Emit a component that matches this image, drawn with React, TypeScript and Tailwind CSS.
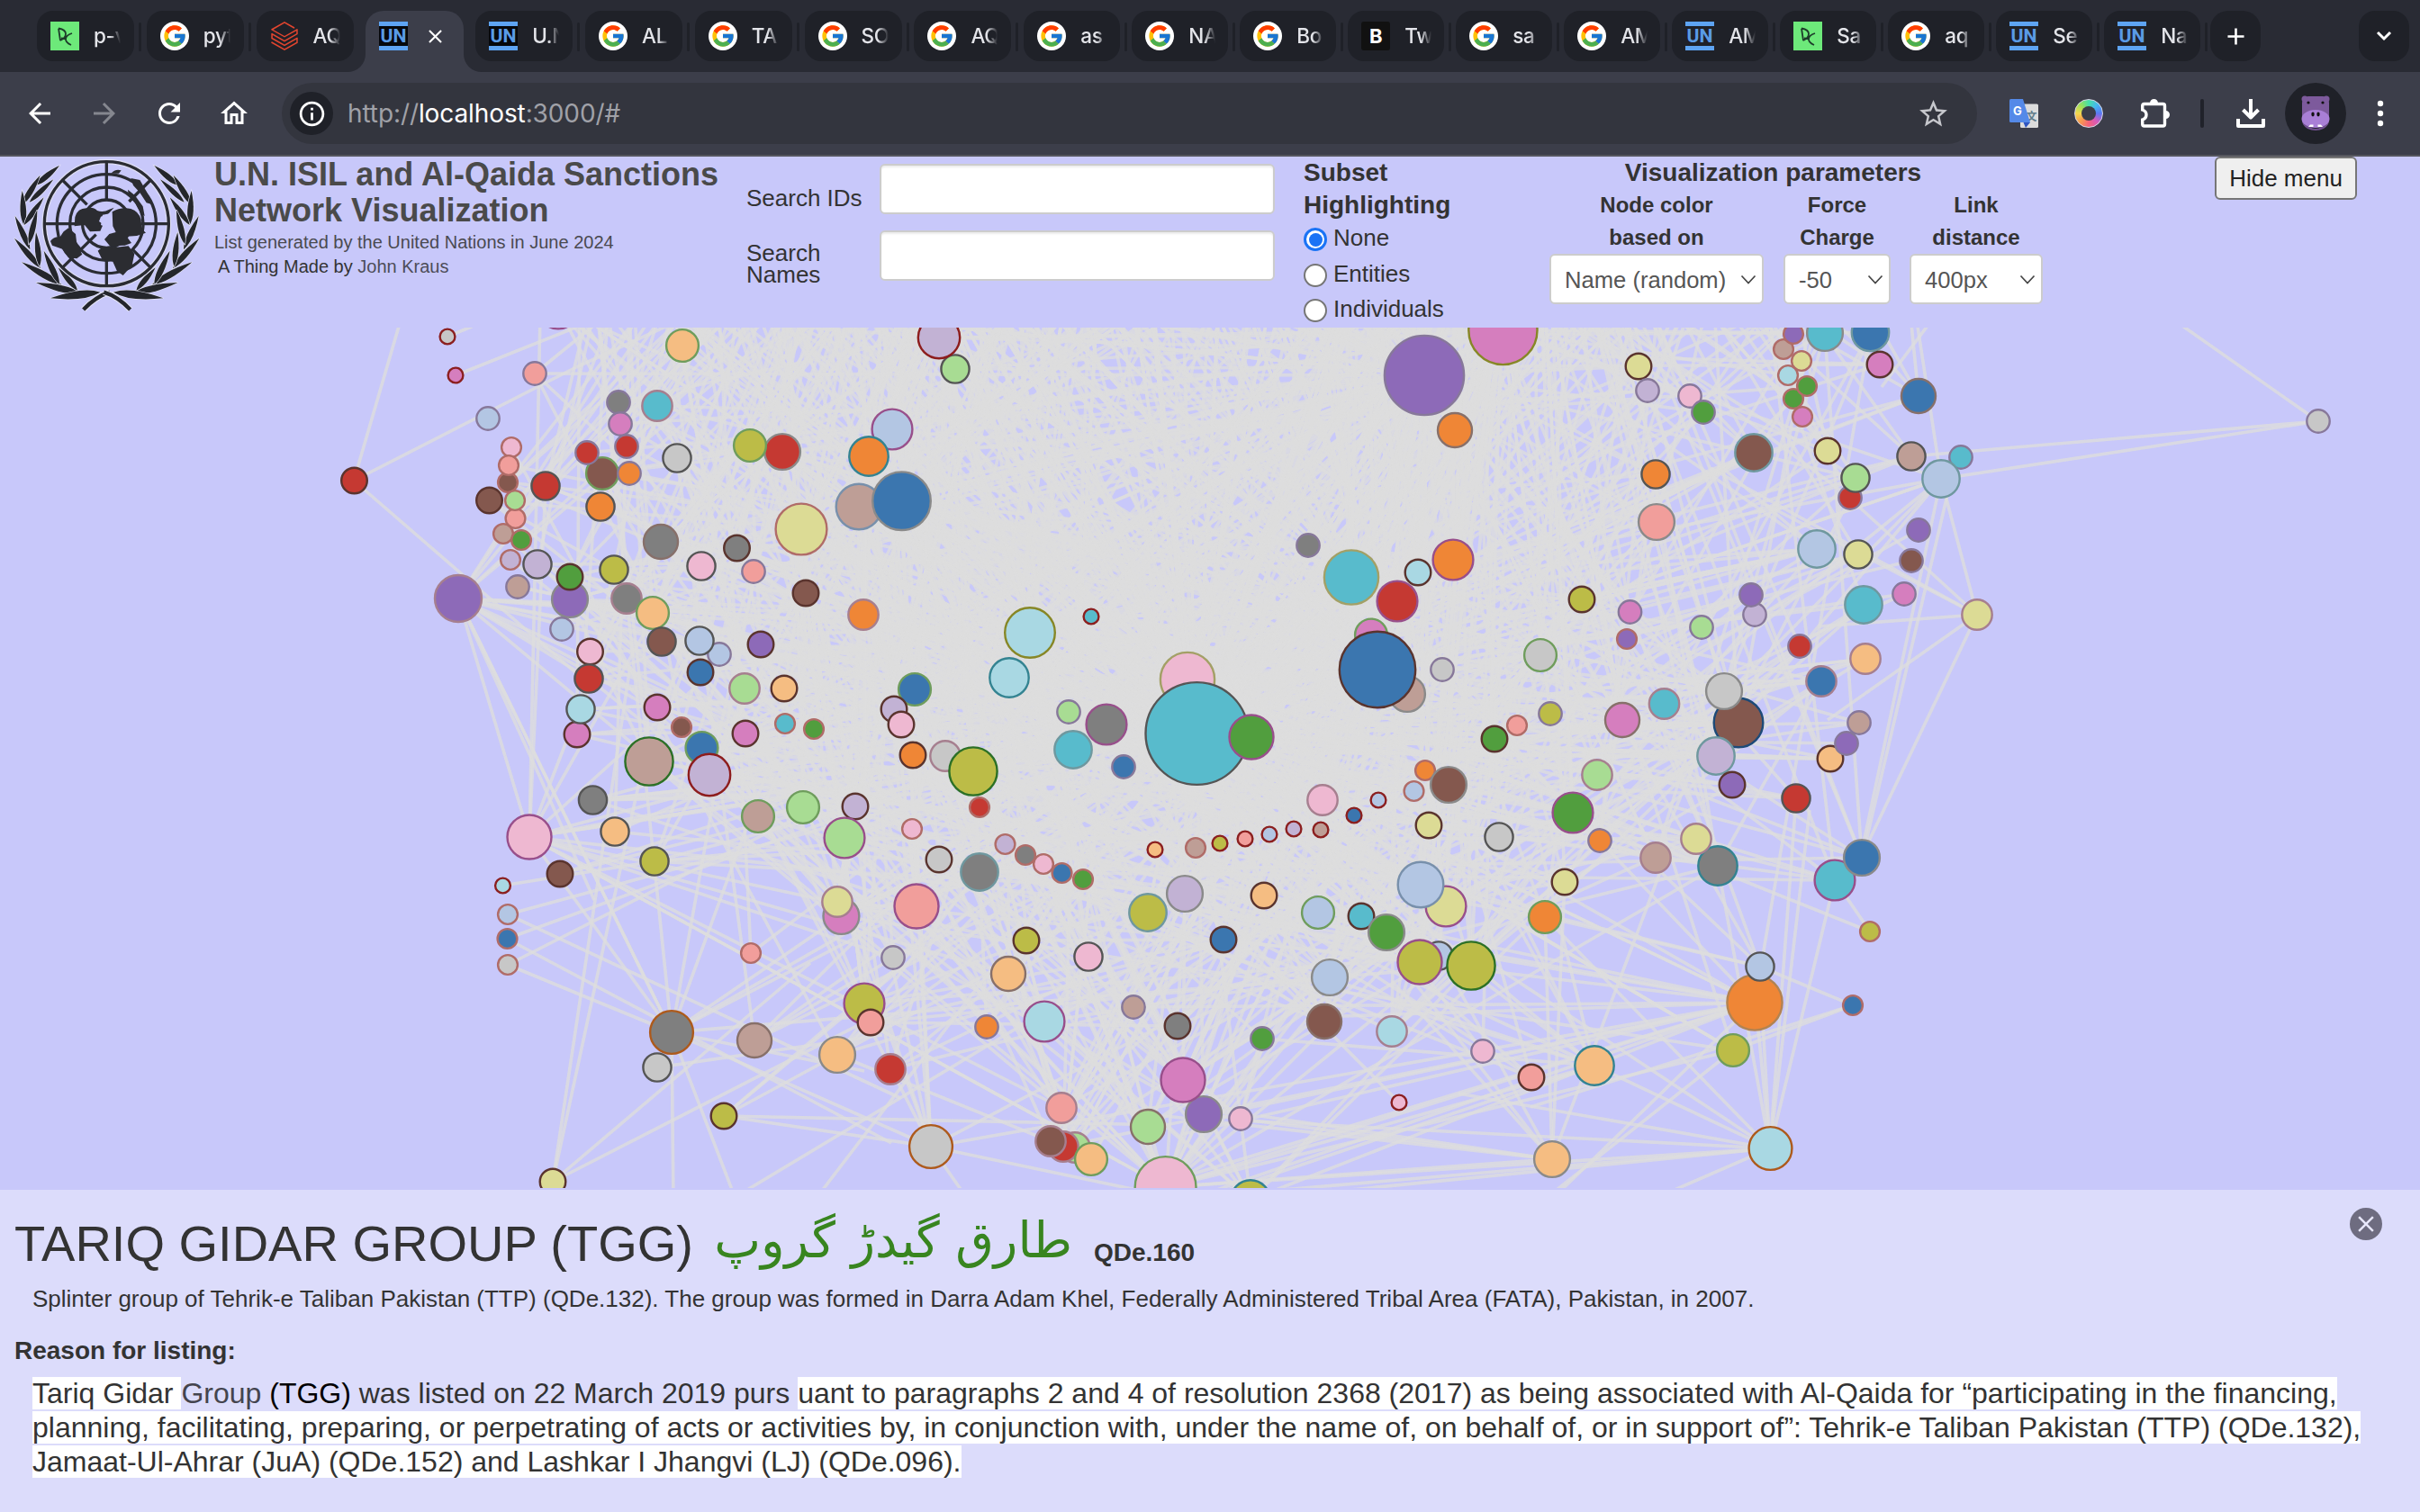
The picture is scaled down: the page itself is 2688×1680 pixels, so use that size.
import React from "react";
import {
  MdArrowBack,
  MdArrowForward,
  MdRefresh,
  MdOutlineHome,
  MdStarOutline,
  MdAdd,
  MdClose,
  MdInfoOutline,
} from "react-icons/md";
import { FcGoogle } from "react-icons/fc";
import { SiDatabricks } from "react-icons/si";

/* ---------------------------------------------------------------- graph data */

const FILL: Record<string, string> = {
  b: "#3b76af", B: "#b3c6e3", o: "#ef8636", O: "#f5bd82", g: "#519e3e", G: "#a8dc93",
  r: "#c53932", R: "#f19e9b", p: "#8d6ab8", P: "#c2b2d4", n: "#84584e", N: "#be9e96",
  m: "#d57ebe", M: "#eeb8d1", k: "#7f7f7f", K: "#c7c7c7", y: "#bcbc47", Y: "#dcdb95",
  c: "#58bbcc", C: "#a9d8e3",
};

/* kind -> [outer radius, outline, number of links] */
const KIND: Record<string, [number, string, number]> = {
  a: [9.3, "#8b1f1f", 1], b: [11.8, "#b06c68", 2], c: [13.6, "#87789a", 3],
  d: [15.2, "#5a342e", 5], e: [16.5, "#555555", 6], f: [17.6, "#a67f8f", 7],
  g: [18.8, "#6f9d5d", 8], h: [19.9, "#87706a", 9], i: [20.8, "#8a8a8a", 10],
  j: [21.6, "#6f989f", 11], k: [22.6, "#338391", 12], l: [23.3, "#984f8b", 13],
  m: [24.1, "#8d1d1d", 14], n: [24.8, "#ad5a1c", 15], o: [25.4, "#984f8b", 16],
  q: [26.2, "#7890ab", 18], r: [26.9, "#a67f8f", 18], s: [27.5, "#2c7026", 20],
  t: [28.2, "#1d4a78", 21], u: [28.7, "#878726", 22], v: [29.3, "#b06c68", 22],
  w: [31, "#a3a066", 26], x: [31.5, "#b28352", 26], y: [33.2, "#8a8a8a", 30],
  z: [34.8, "#6f9d5d", 36], A: [39, "#878726", 45], B: [43.1, "#5a342e", 60],
  C: [45, "#87789a", 60], D: [57.8, "#555555", 110],
};

/* "x y kind fill", painted in order */
const NODES = `
497 374 a K;506 417 a m;594 415 c R;758 384 g O;620 343 l P;1061 410 e G;1043 375 m P;
687 447 c k;730 451 f c;689 471 c m;542 465 c B;696 496 c r;669 526 g n;652 503 c r;699 526 c o;667 563 e o;
752 509 e K;869 502 i r;833 495 g y;991 477 l B;965 507 k o;954 563 q N;1001.5 556.7 y b;890 588 v Y;
564 536 b n;568 497 b M;565 517 b R;543.5 556 d n;572.5 576 b R;572 556 b G;559 593 b N;579 600 b g;567 622 b P;
606 540 e r;393.5 534 d r;597 627 e P;575 652 c N;633 666 i p;633 641 d g;509 665 r p;624 699 c B;
682 633 e y;696 665 f k;725 681 g O;734 602 h k;779 629 e M;818.5 609 d k;837 635 c R;895 659 d n;959 683 f o;
735 713 e n;799 727 c B;777 712 e B;845 716 d p;778 747 d b;827 765 f G;871 765 d O;655.5 724 d M;654 754 e r;
641 816 d m;645 788 e C;730 786 d m;757 808 b n;828 815 d m;872 804 b c;904 810 b g;1016 766 g b;993 788 d P;
1001 805 d M;1014 839 d o;1050 840 f K;1081 857 s y;721 846 s N;779.5 831 g b;788 861 m P;
1144 703 u C;1121 753 k C;1212 685 a c;1187 791 c G;1229 805 l k;1192 833 j c;1319 755 w M;1329.4 815 D c;1390 819 o g;
1582 417 C p;1616 478 h o;1453 606 c k;1501 641.5 w c;1614 622 l o;1552 668 l r;1575 636 d C;1523 705.5 g m;
1563 771 i N;1530 744 B b;1602 744 c K;1660 821 d g;1685 806 b R;1669.4 367 A m;
1820 407 d Y;1830 434 c P;1877 440 c M;1892 458 c g;2027 370 i c;2077.5 369.4 j b;1981 388 b N;1992 371 b p;
2001 401 b Y;1986 417 b C;1992 443 b g;2007 429 b g;2002 463 b m;2088 405 d m;2131 440 h b;1948 503 j n;
2030 501 d Y;2123 507 e N;2178 508 c c;2156 532 j B;1839 527 e o;1840 580 i R;2055 553 c r;2061 531 e G;
2018 610 j B;2064 616 e Y;2131 589 c p;2123 623 c n;2115 660 c m;2070 672 j c;2196 683 f Y;1757 666 d y;
1810.5 680 c m;1807 710 b p;1890 697 c G;1949 683 c P;1945 661 c p;1999 718 c r;2072 732 f O;2023 757 f b;
1711 728 g K;1931 803 t n;1915 768 i K;1906 840 j P;1722 793 c y;1802 800 h m;1848.5 782 f c;2033 843 d O;
2065 803 c N;2051 826 c p;2575 468 c K;
658.5 889 e k;683 924 e O;588 930 o M;622 971 d n;727 957 e y;558.5 984 a C;564 1016 b B;563.5 1043 b b;564 1072 b K;
842 907 g N;892 897 g G;950 896 d P;938 931 l G;1088 897 b r;1013 921 b M;1043 955 d K;1088 969 j k;
1116.5 938 b P;1139 950 b k;1159 960 b M;1179.5 970 b b;1203 977 b g;934.4 1018 i m;930 1002 f Y;1018 1007 o R;
834 1059 b R;992 1064 c K;1140 1045 d y;1120 1082 h O;960 1115 l y;967 1136 d R;1096 1141 c o;1160 1135 l C;
730 1186 e K;746 1147 n k;838 1156 h N;930 1172 i O;989 1188 f r;804 1240 d y;614 1313 d Y;1034 1274 n K;
1179 1231 f R;1194 1275 f G;1181 1274 f r;1167 1268 f n;1212 1288 g O;1275 1252 h G;1337 1238 i p;1314 1200 o m;
1378 1243 c M;1294.6 1319 z M;1389 1333 k y;1248 852 c b;1283 944 a O;1328 942 b N;1355 937 a y;1383 932 a R;
1410 927 a B;1437 921 a P;1467 922 a N;1504 906 a b;1531 889 a B;1469 889 f M;1583 856 b o;1570.5 879 b B;
1609 872 i n;1587 917 d Y;1665 930 e K;1774 861 f G;1747 903 l g;1777 934 c o;1316 993 i P;1275 1014 j y;
1404 995 d O;1464 1014 g B;1512 1018 d c;1540 1036 i g;1606 1007 l Y;1578 983 q B;1738 980 d Y;1716 1019 g o;
1359 1044 d b;1209 1063 e M;1598 1062 e B;1577 1069 o y;1634 1073 s y;1477 1086 i B;1259 1119 c N;1308 1140 d k;
1402 1154 c g;1471 1135 h n;1546 1146 f C;1647 1168 c M;1701 1197 d R;1771 1184 k O;1554 1225 a M;1724 1288 i O;
1924 872 d p;1995 887 e r;2038 978 l c;2068 953 i b;1839 953 f N;1908 962 k k;1884 932 f Y;2077 1035 b y;
1949 1114 x o;1955 1074 e B;2058 1117 b b;1925 1167 g y;1966.5 1276 n C`
  .trim()
  .split(";")
  .map((row) => {
    const [x, y, kind, fill] = row.trim().split(/\s+/);
    return { x: Number(x), y: Number(y), kind, fill };
  });

/* Links of the nodes on the rim: x1 y1 x2 y2 */
const RIM: number[][] = [
  [393, 534, 640, 408], [640, 408, 900, 290], [393, 534, 470, 270], [393, 534, 640, 748], [497, 374, 700, 290],
  [506, 417, 900, 260], [2575, 468, 2123, 507], [2575, 468, 2156, 532], [2575, 468, 2424, 362], [2156, 532, 1780, 600],
  [558, 984, 727, 957], [564, 1016, 990, 900], [564, 1016, 1000, 1220], [563, 1043, 1010, 880], [563, 1043, 990, 1270],
  [564, 1072, 1000, 850], [564, 1072, 746, 1147],
  [614, 1313, 714, 850], [614, 1313, 700, 740], [614, 1313, 900, 1070], [614, 1313, 1010, 1110],
  [804, 1240, 1034, 1274], [804, 1240, 1294, 1250], [804, 1240, 990, 1080], [804, 1240, 1080, 1010], [804, 1240, 1100, 1080],
  [746, 1147, 748, 1340], [746, 1147, 820, 1340], [746, 1147, 1034, 1274], [730, 1186, 980, 1150], [746, 1147, 960, 1190],
  [1034, 1274, 1300, 1330], [1034, 1274, 1080, 1340], [1160, 1000, 900, 1340], [1200, 1100, 800, 1340],
  [509, 665, 561, 840], [561, 840, 588, 930], [509, 665, 600, 864], [600, 864, 660, 1000], [509, 665, 654, 754],
  [509, 665, 746, 1147], [588, 930, 600, 350], [588, 930, 606, 540], [588, 930, 746, 1147],
  [2196, 683, 2156, 532], [2196, 683, 2020, 696], [2196, 683, 2030, 800], [2196, 683, 2066, 955], [2196, 683, 1960, 560],
  [2196, 683, 1900, 520], [2196, 683, 2056, 555], [2156, 532, 2066, 955], [2170, 520, 2068, 955], [2156, 532, 2128, 350],
  [2131, 440, 2122, 350], [2090, 430, 2150, 350], [2077, 1035, 2038, 978], [2077, 1035, 1840, 940],
  [2058, 1117, 1955, 1074], [2058, 1117, 1925, 1167], [2058, 1117, 1700, 1230],
  [1966, 1276, 1950, 1114], [1966, 1276, 1956, 1100], [1966, 1276, 2038, 978], [1966, 1276, 2010, 900],
  [1966, 1276, 1995, 887], [1966, 1276, 1908, 962], [1966, 1276, 1771, 1184], [1966, 1276, 1620, 1215],
  [1966, 1276, 1640, 1060], [1966, 1276, 1377, 1245], [1966, 1276, 1294, 1319], [1966, 1276, 1330, 1330],
  [1966, 1276, 1389, 1333], [1966, 1276, 1860, 1322], [1966, 1276, 1716, 1019],
  [1724, 1288, 1294, 1240], [1724, 1288, 1337, 1238], [1724, 1288, 1400, 1240], [1724, 1288, 1716, 1019],
  [1724, 1288, 1738, 980], [1724, 1288, 1850, 953], [1724, 1288, 1500, 1000], [1724, 1288, 1600, 1062],
  [1724, 1288, 1294, 1319], [1724, 1288, 1546, 1090],
  [1949, 1114, 1294, 1319], [1949, 1114, 1300, 1312], [1949, 1114, 1314, 1260], [1949, 1114, 1337, 1238],
  [1949, 1114, 1389, 1333], [1949, 1114, 1300, 1340], [1949, 1114, 1180, 1274], [1949, 1114, 1460, 1130],
  [1949, 1114, 1716, 1340], [1925, 1167, 1294, 1319], [1925, 1167, 1700, 1345],
  [1771, 1184, 1294, 1319], [1771, 1184, 1340, 1330], [1955, 1074, 1716, 1019], [1955, 1074, 1578, 983],
];

type Pt = { x: number; y: number; w: number };

function buildLinks(): number[][] {
  let seed = 20240617;
  const rnd = () => {
    seed = (seed * 1664525 + 1013904223) % 4294967296;
    return seed / 4294967296;
  };
  const pts: Pt[] = NODES.filter((n) => {
    if (n.x > 2190 || (n.x < 600 && n.y > 950)) return false;
    if (n.x < 500 || (n.x > 2050 && n.y > 1000)) return false;
    if (n.x < 820 && n.y > 1180) return false;
    return !(n.x > 1700 && n.y > 1260);
  }).map((n) => ({ x: n.x, y: n.y, w: KIND[n.kind][2] }));
  /* upper half of the ring, hidden by the menu */
  for (let i = 0; i < 150; i++) {
    const a = Math.PI * (1 + rnd());
    const q = 0.35 + 0.65 * Math.sqrt(rnd());
    pts.push({ x: 1310 + Math.cos(a) * 760 * q, y: 350 + Math.sin(a) * 800 * q, w: 3 + rnd() * 9 });
  }
  pts.push({ x: 1240, y: -60, w: 90 }, { x: 960, y: 120, w: 50 }, { x: 1700, y: 40, w: 50 });
  const total = pts.reduce((s, p) => s + p.w, 0);
  const pick = () => {
    let t = rnd() * total;
    for (const p of pts) {
      t -= p.w;
      if (t <= 0) return p;
    }
    return pts[0];
  };
  const out: number[][] = [];
  for (const p of pts) {
    const n = Math.round(p.w * 0.72);
    for (let i = 0; i < n; i++) {
      for (let k = 0; k < 5; k++) {
        const q = pick();
        const d = Math.hypot(q.x - p.x, q.y - p.y);
        const sideways = Math.abs((p.x + q.x) / 2 - 1310) / 500;
        const low = Math.max(0, (p.y + q.y) / 2 - 790) / 290;
        if (d > 200 && d < 1050 && rnd() < Math.exp(-sideways * sideways - low * low)) {
          out.push([p.x, p.y, q.x, q.y]);
          break;
        }
      }
    }
  }
  return out.concat(RIM);
}

const LINKS = buildLinks();

function Graph() {
  return (
    <svg className="block h-[956px] w-full" viewBox="0 364 2688 956">
      <g stroke="#dddddd" strokeOpacity="0.8" strokeWidth="3.6">
        {LINKS.map((l, i) => (
          <line key={i} x1={l[0]} y1={l[1]} x2={l[2]} y2={l[3]} />
        ))}
      </g>
      <g strokeWidth="2.4">
        {NODES.map((n, i) => {
          const [r, stroke] = KIND[n.kind];
          return <circle key={i} cx={n.x} cy={n.y} r={r - 0.9} fill={FILL[n.fill]} stroke={stroke} />;
        })}
      </g>
    </svg>
  );
}

/* ------------------------------------------------------------------ favicons */

function UnIcon({ dark }: { dark?: boolean }) {
  return (
    <svg width="32" height="32" viewBox="0 0 32 32">
      {dark && <rect y="4" width="32" height="24" fill="#06080c" />}
      <rect width="32" height="5" fill="#5ea4f3" />
      <rect y="27" width="32" height="5" fill="#5ea4f3" />
      <text x="16" y="23.4" fontSize="20.500" fontWeight="700" textAnchor="middle" textLength="29" lengthAdjust="spacingAndGlyphs" fill="#5a9be6" fontFamily="Roboto, sans-serif">
        UN
      </text>
    </svg>
  );
}

function GIcon() {
  return (
    <span className="flex size-8 items-center justify-center rounded-full bg-white">
      <FcGoogle size={28} />
    </span>
  );
}

function DocIcon() {
  return (
    <svg width="32" height="32" viewBox="0 0 32 32">
      <rect width="32" height="32" fill="#6de97a" />
      <path d="M9 7.500L11 21M9 7.500Q17 9 17 13.500T11 21M24 13Q17.500 15 17 19T23 26M12 18.500L17 19" fill="none" stroke="#1d3b2a" strokeWidth="1.8" />
    </svg>
  );
}

function BIcon() {
  return (
    <span className="flex size-8 items-center justify-center rounded-[3px] bg-[#111111] font-['Inter',sans-serif] text-[22px] font-bold leading-none text-white">
      B
    </span>
  );
}

type TabInfo = { icon: "doc" | "g" | "brick" | "undark" | "un" | "b"; label: string; active?: boolean };

const TABS: TabInfo[] = [
  { icon: "doc", label: "p-v" },
  { icon: "g", label: "pyt" },
  { icon: "brick", label: "AQ" },
  { icon: "undark", label: "", active: true },
  { icon: "undark", label: "U.N" },
  { icon: "g", label: "AL" },
  { icon: "g", label: "TA" },
  { icon: "g", label: "SO" },
  { icon: "g", label: "AQ" },
  { icon: "g", label: "as" },
  { icon: "g", label: "NA" },
  { icon: "g", label: "Bo" },
  { icon: "b", label: "Tw" },
  { icon: "g", label: "sa" },
  { icon: "g", label: "AM" },
  { icon: "un", label: "AM" },
  { icon: "doc", label: "Sa" },
  { icon: "g", label: "aq" },
  { icon: "un", label: "Se" },
  { icon: "un", label: "Na" },
];

function TabIcon({ icon }: { icon: TabInfo["icon"] }) {
  if (icon === "doc") return <DocIcon />;
  if (icon === "g") return <GIcon />;
  if (icon === "brick") return <SiDatabricks size={32} color="#e2452f" />;
  if (icon === "b") return <BIcon />;
  return <UnIcon dark={icon === "undark"} />;
}

function Tab({ tab, wide, sep }: { tab: TabInfo; wide: boolean; sep: boolean }) {
  return (
    <div className={wide ? "flex w-[121.8px] shrink-0" : "flex w-[120px] shrink-0"}>
      {tab.active ? (
        <div className="relative flex h-[68px] w-[109px] rounded-t-[20px] bg-[#3c3e4a] pl-[15px] pt-3">
          <svg className="absolute -left-5 bottom-0" width="20" height="20">
            <path d="M20 0A20 20 0 0 1 0 20H20Z" fill="#3c3e4a" />
          </svg>
          <svg className="absolute -right-5 bottom-0" width="20" height="20">
            <path d="M0 0A20 20 0 0 0 20 20H0Z" fill="#3c3e4a" />
          </svg>
          <TabIcon icon={tab.icon} />
          <MdClose size={25} color="#fff" className="ml-[18px] mt-1" />
        </div>
      ) : (
        <div className={wide ? "flex h-14 w-[108px] rounded-[18px] bg-[#1f2128] pl-[15px] pt-3" : "flex h-14 w-[107px] rounded-[18px] bg-[#1f2128] pl-[15px] pt-3"}>
          <TabIcon icon={tab.icon} />
          <span className="ml-4 w-[30px] overflow-hidden whitespace-nowrap font-['Inter',sans-serif] text-[22.500px] font-medium leading-8 tracking-[-0.3px] text-[#e4e5ea] [mask-image:linear-gradient(to_right,black_60%,transparent)]">
            {tab.label}
          </span>
        </div>
      )}
      {sep && <div className="ml-[5px] mt-[13px] h-8 w-[3px] rounded-full bg-[#1f2128]" />}
    </div>
  );
}

function Emblem() {
  const leaves: [number, number, number, number, number][] = [
    [168, 42, 88, 108, 19], [104, 74, 44, 172, 19], [148, 88, 68, 164, 17], [44, 126, 50, 240, 20],
    [116, 148, 50, 240, 18], [20, 210, 70, 322, 19], [94, 190, 66, 304, 19], [18, 284, 106, 384, 20],
    [90, 264, 102, 378, 19], [42, 364, 176, 440, 22], [116, 326, 168, 438, 20], [90, 432, 240, 468, 22],
    [164, 382, 228, 458, 18], [138, 484, 304, 464, 26],
  ];
  const leaf = ([x1, y1, x2, y2, w]: number[]) => {
    const d = Math.hypot(x2 - x1, y2 - y1);
    const nx = (-(y2 - y1) / d) * w;
    const ny = ((x2 - x1) / d) * w;
    const mx = (x1 + x2 * 2) / 3;
    const my = (y1 + y2 * 2) / 3;
    return `M${x1} ${y1}Q${mx + nx} ${my + ny} ${x2} ${y2}Q${mx - nx} ${my - ny} ${x1} ${y1}Z`;
  };
  const half = (
    <>
      {leaves.map((l, i) => (
        <path key={i} d={leaf(l)} fill="#24262b" stroke="#e4e4f4" strokeWidth="4" paintOrder="stroke" />
      ))}
      <path d="M336 464Q290 478 248 522" fill="none" stroke="#e4e4f4" strokeWidth="20" />
      <path d="M336 464Q290 478 248 522" fill="none" stroke="#24262b" strokeWidth="13" />
    </>
  );
  return (
    <svg className="block shrink-0" width="220" height="180" viewBox="0 12 660 540">
      <g>{half}</g>
      <g transform="translate(652 0) scale(-1 1)">{half}</g>
      <circle cx="325" cy="236" r="207" fill="none" stroke="#dedef4" strokeWidth="17" />
      <g fill="none" stroke="#2a2c33" strokeWidth="10">
        <circle cx="325" cy="236" r="207" />
        <circle cx="325" cy="236" r="165" />
        <circle cx="325" cy="236" r="122" />
        <circle cx="325" cy="236" r="80" />
        <path d="M325 30V160M325 320V442M118 236H220M440 236H532M178 90L260 172M472 90L400 162M178 382L290 272M472 382L410 320" />
      </g>
      <g fill="#2b2c31">
        <path d="M220 214q8-30 38-30 22-6 36 8 20 8 40-4l16-6-20 22-24 8-6 16 14 10-10 22-34 2-18-22-34 4z" />
        <path d="M344 196q30-18 62-10 26 8 34 36l2 30 14 14-30 10-34 2 16 22-22 8-50 2-18-22 16-18 22-6-10-20z" />
        <path d="M138 294q10-16 32-14l12-18 16-12 24 20 4 34 18 34-18 14-28-4-20-28-34-12z" />
        <path d="M296 326q18-18 48-10l54-6 20 26-8 38-30 34-20-14-14-32-36-8z" />
        <path d="M406 84l30 6 22 38 20 44-20-6-22-34-22-24zM396 122l24 20 26 36 6 32-14-10-18-34-22-26zM340 68q14-16 34-10l-8 10z" />
      </g>
      <path d="M312 206l24-4 8 26-14 22-24-10z" fill="#c8c8fa" />
    </svg>
  );
}

function Chevron() {
  return (
    <svg width="18" height="12" viewBox="0 0 18 12" fill="none" stroke="#444" strokeWidth="1.7">
      <path d="M1.500 1.500l7.500 8 7.500-8" />
    </svg>
  );
}

function Select({ className, value }: { className: string; value: string }) {
  return (
    <div className={`flex h-14 items-center justify-between rounded-[6px] border-2 border-[#cccccc] bg-white pb-px pl-[15px] pr-[6px] pt-[2px] text-[25.6px] leading-[30px] text-[#555555] ${className}`}>
      <span className="whitespace-nowrap">{value}</span>
      <Chevron />
    </div>
  );
}

function Radio({ label, on }: { label: string; on?: boolean }) {
  return (
    <label className="flex h-[39.500px] text-[26px] leading-[39.500px]">
      <span className={on ? "mt-2 flex size-[26px] items-center justify-center rounded-full border-[3px] border-[#1a73f5] bg-white" : "mt-2 flex size-[26px] items-center justify-center rounded-full border-2 border-[#767676] bg-white"}>
        {on && <span className="size-[15px] rounded-full bg-[#1a73f5]" />}
      </span>
      <span className="ml-[7px]">{label}</span>
    </label>
  );
}

const MARK = "whitespace-pre bg-white";

export default function App() {
  return (
    <div className="flex h-[1680px] w-[2688px] flex-col overflow-hidden bg-[#c8c8fa] font-['Liberation_Sans',Arial,sans-serif] text-[#333333]">
      {/* tab strip */}
      <div className="flex h-20 shrink-0 bg-[#292b34] pl-[41px] pt-3">
        {TABS.map((t, i) => (
          <Tab key={i} tab={t} wide={i < 9} sep={i !== 2 && i !== 3} />
        ))}
        <div className="-ml-[2px] flex h-14 w-[56px] shrink-0 items-center justify-center rounded-[20px] bg-[#1f2128]">
          <MdAdd size={31} color="#fff" />
        </div>
        <div className="ml-auto mr-3 flex h-14 w-[56px] items-center justify-center rounded-[18px] bg-[#1f2128]">
          <svg width="18" height="12" viewBox="0 0 18 12" fill="none" stroke="#fff" strokeWidth="3">
            <path d="M2 2l7 7 7-7" />
          </svg>
        </div>
      </div>

      {/* toolbar */}
      <div className="flex h-[94px] shrink-0 items-start border-b-2 border-[#55565e] bg-[#3c3e4a] pl-[26px] pt-3">
        <div className="flex h-[68px] w-[287px] items-center gap-[36px] text-white">
          <MdArrowBack size={36} />
          <MdArrowForward size={36} color="#85878f" />
          <MdRefresh size={36} />
          <MdOutlineHome size={36} />
        </div>
        <div className="flex h-[68px] w-[1883px] items-center rounded-full bg-[#33353e] pl-[9px] pr-[30px]">
          <span className="flex size-12 items-center justify-center rounded-full bg-[#1f2128]">
            <MdInfoOutline size={33} color="#fff" />
          </span>
          <span className="ml-4 font-['Inter',sans-serif] text-[28px] tracking-[-0.1px] text-[#a0a1a8]">
            http://<span className="text-white">localhost</span>:3000/#
          </span>
          <MdStarOutline size={37} color="#c6c7cc" className="ml-auto" />
        </div>
        <div className="flex h-[68px] items-center">
          <svg className="ml-9" width="32" height="32" viewBox="0 0 32 32">
            <rect x="12" y="5.500" width="20" height="26.500" rx="1.500" fill="#dcdcdc" />
            <text x="24.500" y="24" fontSize="12" textAnchor="middle" fill="#607d8b" fontFamily="'Noto Sans CJK SC', sans-serif" fontWeight="700">文</text>
            <path d="M0 1.500Q0 0 1.500 0H15L23 26H1.500Q0 26 0 24.500Z" fill="#5489e8" />
            <path d="M15.500 26H23L18 32Z" fill="#2f55c0" />
            <text x="9" y="17.500" fontSize="13" textAnchor="middle" fill="#fff" fontFamily="Inter, sans-serif" fontWeight="700">G</text>
          </svg>
          <div className="ml-10 flex size-8 items-center justify-center rounded-full border border-[#d8d8e8] bg-[conic-gradient(#45e0a8,#45b8f0,#5a78f5,#d65ab8,#f5617a,#f79a50,#f5d84e,#9be05a,#45e0a8)]">
            <div className="size-4 rounded-full bg-[#3c3e4a]" />
          </div>
          <svg className="ml-[40px]" width="36" height="36" viewBox="0 0 36 36" fill="none" stroke="#fff" strokeWidth="3.400">
            <path d="M5.700 7.500Q3.700 7.500 3.700 9.500V14Q8 15.500 8 19.500T3.700 25V30Q3.700 32 5.700 32H26.500Q28.500 32 28.500 30V9.500Q28.500 7.500 26.500 7.500Z" />
            <path d="M12 6.500a4.500 4.500 0 0 1 9 0zM29.500 15a4.500 4.500 0 0 1 0 9z" fill="#fff" stroke="none" />
          </svg>
          <div className="ml-[32px] h-8 w-1 rounded-full bg-[#20222a]" />
          <svg className="ml-9" width="32" height="32" viewBox="0 0 32 32" fill="none" stroke="#fff" strokeWidth="4">
            <path d="M16 0V20M7.500 12L16 20.500 24.500 12M2 22V30H30V22" strokeLinejoin="round" />
          </svg>
          <div className="ml-[22px] flex size-[68px] items-center justify-center rounded-full bg-[#1f2128]">
            <svg width="32" height="40" viewBox="0 0 32 40">
              <rect x="1" y="1" width="30" height="34" rx="7" fill="#7d5a9c" />
              <circle cx="4" cy="4" r="3.500" fill="#7d5a9c" />
              <circle cx="28" cy="4" r="3.500" fill="#7d5a9c" />
              <path d="M2 28Q16 46 30 28V32Q26 39 16 39T2 32Z" fill="#70508e" />
              <ellipse cx="16" cy="26" rx="15.500" ry="10" fill="#a97fd6" />
              <circle cx="8" cy="8" r="1.600" fill="#111" />
              <circle cx="24" cy="8" r="1.600" fill="#111" />
              <ellipse cx="13" cy="21" rx="1.700" ry="2.400" fill="#111" />
              <ellipse cx="19" cy="21" rx="1.700" ry="2.400" fill="#111" />
              <path d="M8 35l2-2.500h3.500V35zM24 35l-2-2.500h-3.500V35z" fill="#fff" />
            </svg>
          </div>
          <svg className="ml-[34px]" width="8" height="30" viewBox="0 0 8 30" fill="#fff">
            <circle cx="4" cy="4" r="3.200" />
            <circle cx="4" cy="15" r="3.200" />
            <circle cx="4" cy="26" r="3.200" />
          </svg>
        </div>
      </div>

      {/* menu */}
      <div className="flex h-[190px] shrink-0 items-start pl-[10px]">
        <Emblem />
        <div className="ml-[8px] w-[591px] shrink-0 whitespace-nowrap">
          <h1 className="text-[36px] font-bold leading-10 text-[#4a4a4a]">
            U.N. ISIL and Al-Qaida Sanctions
            <br />
            Network Visualization
          </h1>
          <p className="mt-px text-[20px] leading-7 text-[#4a4a50]">List generated by the United Nations in June 2024</p>
          <p className="pl-[4px] text-[20px] leading-[27px]">
            A Thing Made by <span className="text-[#4d4d58]">John Kraus</span>
          </p>
        </div>
        <div className="w-[587px] shrink-0 pt-2 text-[26px] leading-[24px]">
          <div className="flex h-14">
            <span className="w-[148px] pt-[26px]">Search IDs</span>
            <div className="w-[439px] rounded-[6px] border-2 border-[#cccccc] bg-white shadow-[inset_0_2px_2px_rgba(0,0,0,0.08)]" />
          </div>
          <div className="mt-[18px] flex h-14">
            <span className="w-[148px] pt-[13px]">
              Search
              <br />
              Names
            </span>
            <div className="w-[439px] rounded-[6px] border-2 border-[#cccccc] bg-white shadow-[inset_0_2px_2px_rgba(0,0,0,0.08)]" />
          </div>
        </div>
        <div className="ml-[32px] w-[273px] shrink-0">
          <div className="text-[28px] font-bold leading-9">
            Subset
            <br />
            Highlighting
          </div>
          <div className="-mt-px">
            <Radio label="None" on />
            <Radio label="Entities" />
            <Radio label="Individuals" />
          </div>
        </div>
        <div className="w-[548px] shrink-0">
          <div className="w-[497px] text-center text-[28px] font-bold leading-9">Visualization parameters</div>
          <div className="flex text-center text-[24px] font-bold leading-9">
            <div className="w-[238px]">
              Node color
              <br />
              based on
            </div>
            <div className="ml-[22px] w-[119px]">
              Force
              <br />
              Charge
            </div>
            <div className="ml-[21px] w-[148px]">
              Link
              <br />
              distance
            </div>
          </div>
          <div className="flex">
            <Select className="w-[238px]" value="Name (random)" />
            <Select className="ml-[22px] w-[119px]" value="-50" />
            <Select className="ml-[21px] w-[148px]" value="400px" />
          </div>
        </div>
        <button className="ml-[191px] h-[48px] w-[158px] shrink-0 rounded-[6px] border-2 border-[#767676] bg-[#efefef] text-[26px] leading-[42px] text-[#222222]">
          Hide menu
        </button>
      </div>

      <Graph />

      {/* details panel */}
      <div className="mt-[2px] flex h-[358px] shrink-0 justify-between bg-[#dcdcfb] pt-7">
        <div className="whitespace-nowrap pl-4">
          <div className="flex h-16 items-baseline leading-[64px]">
            <span className="text-[56px]">TARIQ GIDAR GROUP (TGG)</span>
            <span dir="rtl" className="relative -top-1 ml-[27px] w-[394px] font-['DejaVu_Sans',sans-serif] text-[55px] text-[#38851f]">
              طارق گیدڑ گروپ
            </span>
            <span className="ml-[24px] text-[28px] font-bold">QDe.160</span>
          </div>
          <p className="mt-[13px] pl-5 text-[26px] leading-8">
            Splinter group of Tehrik-e Taliban Pakistan (TTP) (QDe.132). The group was formed in Darra Adam Khel, Federally Administered Tribal Area (FATA), Pakistan, in 2007.
          </p>
          <h2 className="mt-[26px] text-[28px] font-bold leading-8">Reason for listing:</h2>
          <div className="mt-[13px] flex flex-col items-start gap-[2px] pl-5 text-[32px] leading-9">
            <div className="flex">
              <span className={MARK}>Tariq Gidar </span>
              <span className="whitespace-pre text-[#44444e]">Group </span>
              <span className="text-black">(TGG)</span>
              <span className="whitespace-pre"> was listed on 22 March 2019 purs </span>
              <span className={MARK}>
                uant to paragraphs 2 and 4 of resolution 2368 (2017) as being associated with Al-Qaida for “participating in the financing,
              </span>
            </div>
            <span className={MARK}>
              planning, facilitating, preparing, or perpetrating of acts or activities by, in conjunction with, under the name of, on behalf of, or in support of”: Tehrik-e Taliban Pakistan (TTP) (QDe.132),
            </span>
            <span className={MARK}>Jamaat-Ul-Ahrar (JuA) (QDe.152) and Lashkar I Jhangvi (LJ) (QDe.096).</span>
          </div>
        </div>
        <div className="-ml-3 mr-[42px] mt-[-8px] flex size-9 shrink-0 items-center justify-center rounded-full bg-[#6e6c80]">
          <MdClose size={30} color="#e8e8fc" />
        </div>
      </div>
    </div>
  );
}
